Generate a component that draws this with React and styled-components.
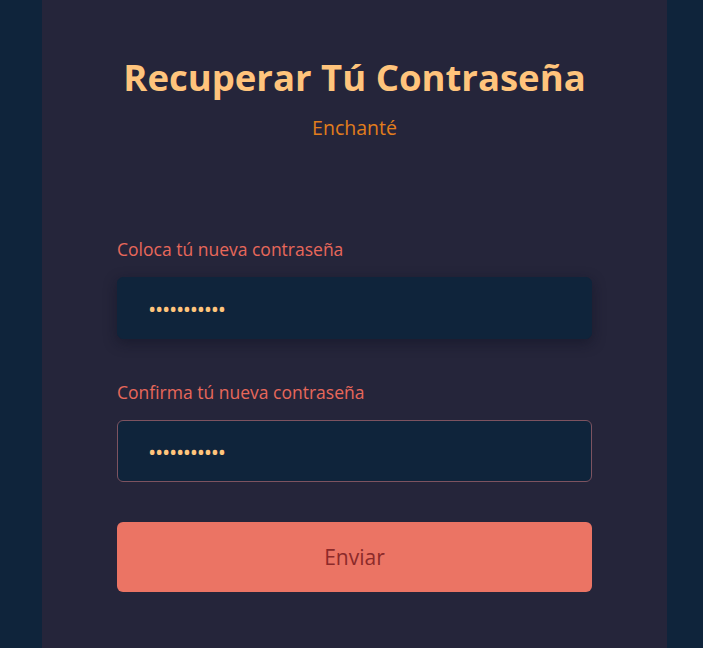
import React from "react";
import styled, { createGlobalStyle } from "styled-components";

const Global = createGlobalStyle`
  html, body { margin: 0; padding: 0; background: #0f243b; }
  body { font-family: "Open Sans", "Noto Sans", sans-serif; overflow: hidden; }
  * { box-sizing: border-box; }
`;

const Page = styled.div`
  min-height: 648px;
  display: flex;
  padding-left: 42px;
`;

const Card = styled.div`
  width: 625px;
  min-height: 648px;
  background: #25253a;
  padding: 56px 75px 40px;
  display: flex;
  flex-direction: column;
`;

const Title = styled.h1`
  margin: 0;
  text-align: center;
  font-size: 36.5px;
  font-weight: 700;
  color: #ffc47c;
  line-height: 42px;
`;

const Subtitle = styled.p`
  margin: 19px 0 0;
  text-align: center;
  font-size: 19.5px;
  color: #e27d1c;
  line-height: 22px;
`;

const Form = styled.form`
  margin-top: 99px;
  display: flex;
  flex-direction: column;
`;

const Field = styled.div`
  display: flex;
  flex-direction: column;
  margin-bottom: ${(p) => p.$mb}px;
`;

const Label = styled.label`
  font-size: 17.5px;
  color: #e8685a;
  line-height: 22px;
  margin-bottom: 17px;
`;

const Input = styled.input`
  height: 62px;
  width: 100%;
  border-radius: 6px;
  background: #0f243b;
  border: 1px solid ${(p) => (p.$focus ? "#7d5360" : "#0f243b")};
  box-shadow: ${(p) => (p.$focus ? "none" : "0 4px 14px rgba(10, 14, 30, 0.45)")};
  padding: 0 30px;
  color: #ffc47c;
  font-size: 22px;
  font-family: "Open Sans", sans-serif;
  letter-spacing: -1.3px;
  outline: none;
`;

const Button = styled.button`
  height: 70px;
  width: 100%;
  border: none;
  border-radius: 6px;
  background: #eb7464;
  color: #8c2a2a;
  font-size: 21px;
  font-family: "Open Sans", sans-serif;
  cursor: pointer;
`;

export default function App() {
  return (
    <>
      <Global />
      <Page>
        <Card>
          <Title>Recuperar Tú Contraseña</Title>
          <Subtitle>Enchanté</Subtitle>
          <Form onSubmit={(e) => e.preventDefault()}>
            <Field $mb={42}>
              <Label>Coloca tú nueva contraseña</Label>
              <Input type="password" defaultValue="12345678901" />
            </Field>
            <Field $mb={40}>
              <Label>Confirma tú nueva contraseña</Label>
              <Input type="password" defaultValue="12345678901" $focus />
            </Field>
            <Button type="submit">Enviar</Button>
          </Form>
        </Card>
      </Page>
    </>
  );
}
